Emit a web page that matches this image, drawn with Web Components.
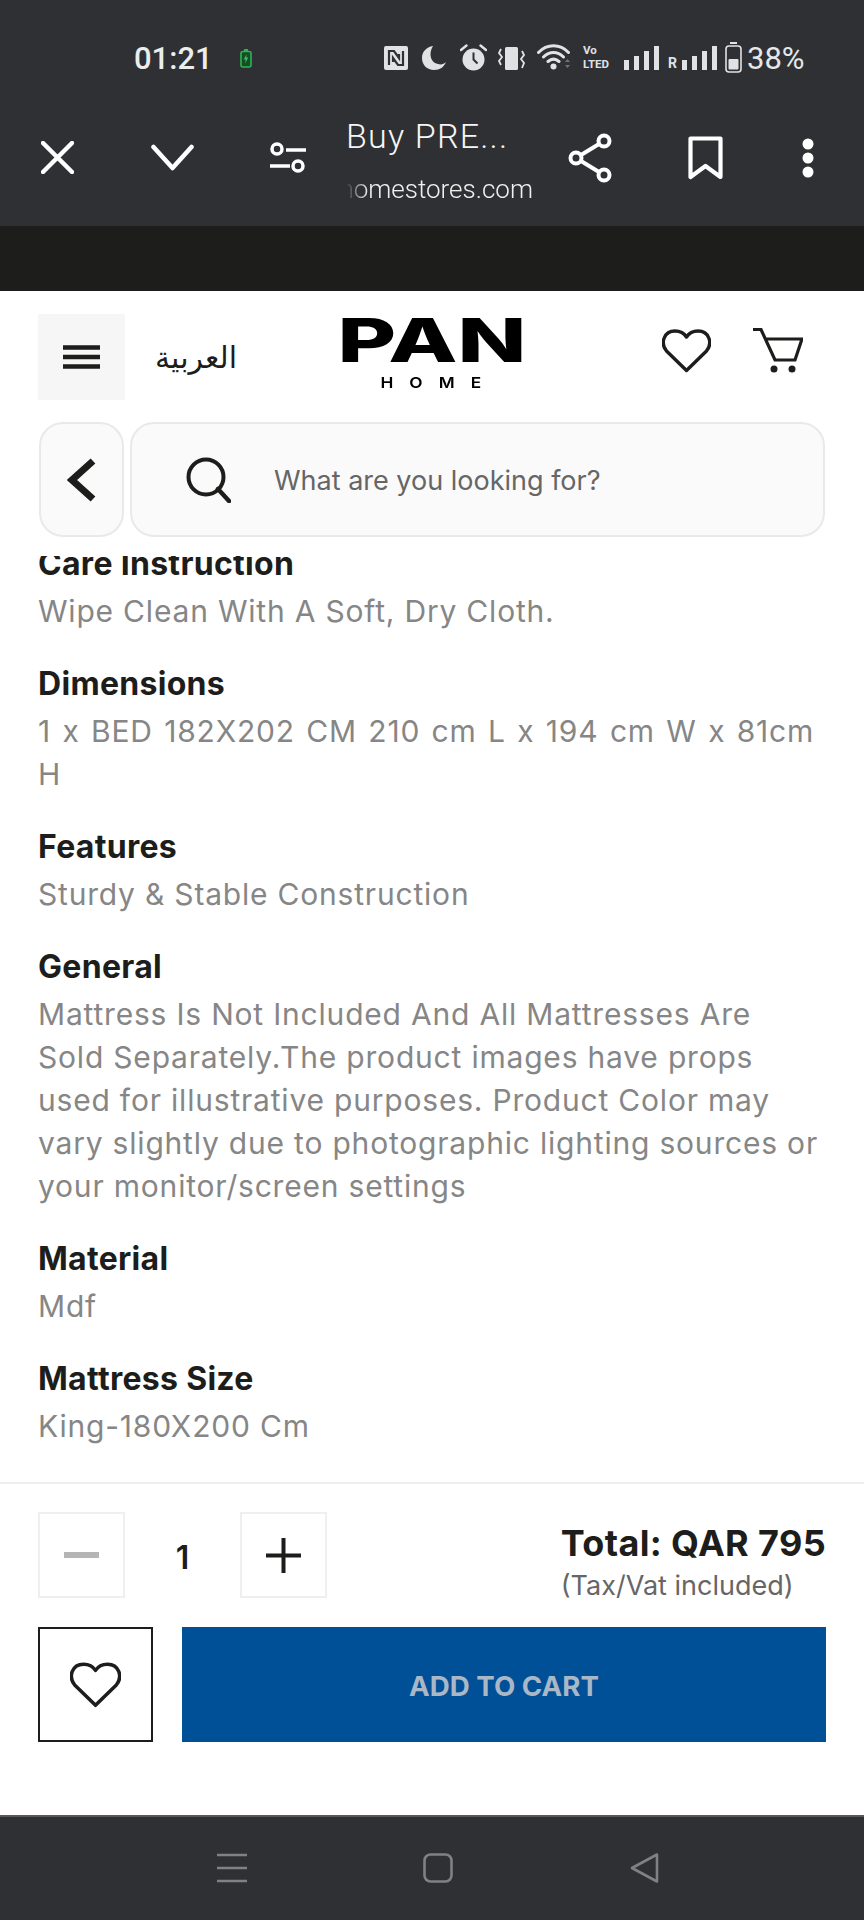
<!DOCTYPE html>
<html>
<head>
<meta charset="utf-8">
<style>
  html, body { margin: 0; padding: 0; background: #fff; }
  body { width: 864px; height: 1920px; overflow: hidden; display: flex; flex-direction: column; font-family: Inter, "Liberation Sans", sans-serif; }
</style>
</head>
<body>
<status-bar></status-bar>
<tab-toolbar title-text="Buy PRE..." domain="homestores.com"></tab-toolbar>
<site-header></site-header>
<spec-list>
  <spec-item label="Care Instruction">Wipe Clean With A Soft, Dry Cloth.</spec-item>
  <spec-item label="Dimensions"><span style="word-spacing:2.2px">1 x BED 182X202 CM 210 cm L x 194 cm W x 81cm H</span></spec-item>
  <spec-item label="Features">Sturdy &amp; Stable Construction</spec-item>
  <spec-item label="General">Mattress Is Not Included And All Mattresses Are Sold Separately.The product images have props used for illustrative purposes. Product Color may vary slightly due to photographic lighting sources or your monitor/screen settings</spec-item>
  <spec-item label="Material">Mdf</spec-item>
  <spec-item label="Mattress Size">King-180X200 Cm</spec-item>
</spec-list>
<buy-footer></buy-footer>
<nav-bar></nav-bar>

<script>
class StatusBar extends HTMLElement {
  constructor() {
    super();
    this.attachShadow({ mode: 'open' });
    this.shadowRoot.innerHTML = `
      <style>
        :host { display: block; height: 96px; background: #2f3034; color: #e6e7e9; font-family: Roboto, sans-serif; position: relative; }
        .row { display: flex; align-items: flex-start; height: 96px; padding-left: 134px; box-sizing: border-box; }
        .time { font-size: 31px; line-height: 36px; margin-top: 41px; font-weight: 500; width: 106px; color: #eceded; }
        svg { display: block; flex: none; }
        .pct { font-size: 31px; line-height: 36px; margin-top: 41px; margin-left: 5px; }
        .volte { margin: 44px 0 0 12px; width: 29px; font: 700 11.500px/13.500px Roboto, sans-serif; color: #e1e2e4; white-space: nowrap; }
      </style>
      <div class="row">
        <span class="time">01:21</span>
        <svg style="margin-top:49px" width="12" height="19" viewBox="0 0 12 19"><rect x="1" y="2.500" width="10" height="15.500" rx="2" fill="#154d26" stroke="#2fb352" stroke-width="1.600"/><rect x="4" y="0" width="4" height="2" fill="#2fb352"/><path d="M6.600 5 3.800 10.500h2l-.6 4 3-6H6.200z" fill="#38c45c"/></svg>
        <svg style="margin:46px 0 0 132px" width="24" height="24" viewBox="0 0 24 24"><rect width="24" height="24" rx="2" fill="#e1e2e4"/><path d="M5 19V5h5l5 7V8M19 5v14h-5l-5-7v4" fill="none" stroke="#2f3034" stroke-width="2.200"/></svg>
        <svg style="margin:46px 0 0 14px" width="24" height="24" viewBox="0 0 24 24"><path d="M11 0C4 1 0 6 0 12c0 7 5 12 12 12 6 0 10-3 12-8-2 2-5 3-8 2C9 17 6 8 11 0z" fill="#e1e2e4"/></svg>
        <svg style="margin:44px 0 0 14px" width="27" height="27" viewBox="0 0 27 27"><circle cx="13.500" cy="15.500" r="11" fill="#e1e2e4"/><path d="M13.500 8.500v7l4 4" fill="none" stroke="#2f3034" stroke-width="2"/><path d="M1 6 6.500 1.500M26 6 20.500 1.500" stroke="#e1e2e4" stroke-width="2.400" stroke-linecap="round"/></svg>
        <svg style="margin:47px 0 0 11px" width="27" height="23" viewBox="0 0 27 23"><rect x="7" y="0" width="13" height="23" rx="1.500" fill="#e1e2e4"/><path d="M3 2 1 6l3 4-3 4 2 4M24 4l2 4-3 4 3 4-2 5" fill="none" stroke="#e1e2e4" stroke-width="1.800"/></svg>
        <svg style="margin:44px 0 0 12px" width="34" height="26" viewBox="0 0 34 26"><path d="M1.500 8.500C10-.5 23-.5 31.500 8.500M6.500 13c6-6 14-6 20 0M11 17.500c3.500-3 7.500-3 11 0" fill="none" stroke="#e1e2e4" stroke-width="3" stroke-linecap="round"/><circle cx="16.500" cy="22.500" r="3" fill="#e1e2e4"/><path d="M28 18l2.500-3 2.500 3zM28 21l2.500 3 2.500-3z" fill="#70727a"/></svg>
        <span class="volte">Vo<br>LTED</span>
        <svg style="margin:46px 0 0 12px" width="35" height="24" viewBox="0 0 35 24"><g fill="#e1e2e4"><rect x="0" y="14" width="5" height="10"/><rect x="10" y="10" width="5" height="14"/><rect x="20" y="5" width="5" height="19"/><rect x="30" y="0" width="5" height="24"/></g></svg>
        <span style="margin:55px 0 0 9px;width:14px;font:700 14px/16px Roboto,sans-serif;color:#e1e2e4">R</span>
        <svg style="margin:46px 0 0 0" width="35" height="24" viewBox="0 0 35 24"><g fill="#e1e2e4"><rect x="0" y="14" width="5" height="10"/><rect x="10" y="10" width="5" height="14"/><rect x="20" y="5" width="5" height="19"/><rect x="30" y="0" width="5" height="24"/></g></svg>
        <svg style="margin:42px 0 0 8px" width="17" height="31" viewBox="0 0 17 31"><rect x="5" y="0" width="7" height="2" fill="#e1e2e4"/><rect x="1" y="4" width="15" height="26" rx="3" fill="none" stroke="#e1e2e4" stroke-width="1.600"/><rect x="3.500" y="17" width="10" height="10.500" rx="1" fill="#e1e2e4"/></svg>
        <span class="pct">38%</span>
      </div>
    `;
  }
}
customElements.define('status-bar', StatusBar);

class TabToolbar extends HTMLElement {
  constructor() {
    super();
    this.attachShadow({ mode: 'open' });
    const title = this.getAttribute('title-text');
    const domain = this.getAttribute('domain');
    this.shadowRoot.innerHTML = `
      <style>
        :host { display: block; background: #2f3034; color: #fff; font-family: Roboto, sans-serif; }
        .bar { height: 130px; display: flex; align-items: center; padding-bottom: 7px; box-sizing: border-box; }
        .strip { height: 65px; background: #1d1e1c; }
        svg { display: block; flex: none; }
        .titles { width: 187px; margin-left: 40px; align-self: flex-start; overflow: hidden; }
        .title { font-size: 34px; line-height: 40px; margin-top: 20px; font-weight: 300; letter-spacing: 1.200px; color: #f6f6f6; white-space: nowrap; }
        .domain { font-size: 26px; line-height: 30px; margin-top: 18px; font-weight: 300; color: #f0f0f0; white-space: nowrap; direction: rtl; text-align: left;
          -webkit-mask-image: linear-gradient(90deg, transparent 0, #000 22px); mask-image: linear-gradient(90deg, transparent 0, #000 22px); }
      </style>
      <div class="bar">
        <svg style="margin-left:41px" width="33" height="33" viewBox="0 0 33 33"><path d="M2 2l29 29M31 2 2 31" stroke="#fff" stroke-width="4.500" stroke-linecap="round"/></svg>
        <svg style="margin-left:77px" width="43" height="27" viewBox="0 0 43 27"><path d="M2.500 3 21.500 24 40.500 3" fill="none" stroke="#fff" stroke-width="4.500" stroke-linecap="round" stroke-linejoin="round"/></svg>
        <svg style="margin-left:76px" width="36" height="32" viewBox="0 0 36 32"><g fill="none" stroke="#fff" stroke-width="3.500"><circle cx="7" cy="7" r="5"/><circle cx="28" cy="24" r="5"/><path d="M16 8h20M0 24h20"/></g></svg>
        <div class="titles">
          <div class="title">${title}</div>
          <div class="domain"><bdi>${domain}</bdi></div>
        </div>
        <svg style="margin-left:35px" width="44" height="50" viewBox="0 0 44 50"><g fill="none" stroke="#fff" stroke-width="4"><circle cx="36" cy="8" r="5.500"/><circle cx="8" cy="25" r="5.500"/><circle cx="36" cy="42" r="5.500"/><path d="M31 11 13 22M13 28l18 11"/></g></svg>
        <svg style="margin-left:76px" width="35" height="44" viewBox="0 0 35 44"><path d="M2.500 2.500h30V41L17.500 30 2.500 41z" fill="none" stroke="#fff" stroke-width="4.200" stroke-linejoin="round"/></svg>
        <svg style="margin-left:79px" width="12" height="40" viewBox="0 0 12 40"><g fill="#fff"><circle cx="6" cy="6" r="5.500"/><circle cx="6" cy="20" r="5.500"/><circle cx="6" cy="34" r="5.500"/></g></svg>
      </div>
      <div class="strip"></div>
    `;
  }
}
customElements.define('tab-toolbar', TabToolbar);

class SiteHeader extends HTMLElement {
  constructor() {
    super();
    this.attachShadow({ mode: 'open' });
    this.shadowRoot.innerHTML = `
      <style>
        :host { display: block; background: #fff; padding: 23px 39px 19px 38px; color: #1d1d1b; position: relative; z-index: 2; }
        .top { display: flex; align-items: flex-start; height: 86px; }
        .menu { width: 87px; height: 86px; background: #f6f6f6; display: flex; align-items: center; justify-content: center; flex: none; }
        .lang { font: 30px/40px "DejaVu Sans", sans-serif; width: 100px; margin: 24px 2px 0 30px; }
        .logo { width: 184px; margin-left: 83px; flex: none; display: flex; flex-direction: column; align-items: center; color: #000; }
        .pan { font: 800 60px/44px Inter, sans-serif; height: 44px; margin-top: 4px; transform: scaleX(1.5); white-space: nowrap; }
        .home { font: 600 15px/14px Inter, sans-serif; letter-spacing: 14px; margin: 14px -14px 0 0; transform: scaleX(1.15); }
        .heart { margin: 15px 0 0 138px; }
        .cart { margin: 14px 0 0 42px; }
        svg { display: block; flex: none; }
        .search { display: flex; gap: 6px; margin-top: 22px; height: 115px; }
        .back, .field { background: #fafafa; border: 2px solid #e9e9e9; box-sizing: border-box; border-radius: 24px; display: flex; align-items: center; }
        .back { width: 85px; margin-left: 1px; justify-content: center; flex: none; }
        .field { flex: 1; padding-left: 54px; }
        .ph { font: 400 27px/40px Inter, sans-serif; color: #666; margin: 3px 0 0 43px; }
      </style>
      <div class="top">
        <div class="menu"><svg width="37" height="24" viewBox="0 0 37 24"><path d="M0 2.500h37M0 12h37M0 21.500h37" stroke="#1d1d1b" stroke-width="4.500"/></svg></div>
        <span class="lang" lang="ar">العربية</span>
        <div class="logo"><span class="pan">PAN</span><span class="home">HOME</span></div>
        <svg class="heart" width="49" height="44" viewBox="0 0 49 44"><path d="M24.500 41.500 4.500 22C-2 14 2 2 13 2c5 0 9 2 11.500 6C27 4 31 2 36 2c11 0 15 12 8.500 20z" fill="none" stroke="#1d1d1b" stroke-width="3.400" stroke-linejoin="round"/></svg>
        <svg class="cart" width="50" height="46" viewBox="0 0 50 46"><path d="M0 1.500h8L22 32h20l7-21H13" fill="none" stroke="#1d1d1b" stroke-width="3.200"/><circle cx="21" cy="41" r="3.500" fill="#1d1d1b"/><circle cx="39" cy="41" r="3.500" fill="#1d1d1b"/></svg>
      </div>
      <div class="search">
        <div class="back"><svg width="30" height="44" viewBox="0 0 30 44"><path d="M26 3 5 22l21 19" fill="none" stroke="#1d1d1b" stroke-width="7"/></svg></div>
        <div class="field">
          <svg width="45" height="46" viewBox="0 0 45 46"><circle cx="20" cy="20" r="17.500" fill="none" stroke="#1d1d1b" stroke-width="4"/><path d="M32 32l11 12" stroke="#1d1d1b" stroke-width="4.500" stroke-linecap="round"/></svg>
          <span class="ph">What are you looking for?</span>
        </div>
      </div>
    `;
  }
}
customElements.define('site-header', SiteHeader);

class SpecList extends HTMLElement {
  constructor() {
    super();
    this.attachShadow({ mode: 'open' });
    this.shadowRoot.innerHTML = `
      <style>
        :host { display: flex; flex-direction: column; justify-content: flex-end; gap: 29px; flex: 1; min-height: 0; overflow: hidden; padding: 0 38px 34px; background: #fff; box-sizing: border-box; }
      </style>
      <slot></slot>
    `;
  }
}
customElements.define('spec-list', SpecList);

class SpecItem extends HTMLElement {
  constructor() {
    super();
    this.attachShadow({ mode: 'open' });
    this.shadowRoot.innerHTML = `
      <style>
        :host { display: block; flex: none; font-family: Inter, sans-serif; }
        h3 { margin: 0 0 5px; font-size: 32px; line-height: 43px; font-weight: 700; letter-spacing: .3px; color: #1d1d1b; }
        div { font-size: 30px; line-height: 43px; letter-spacing: .8px; color: #868686; }
      </style>
      <h3>${this.getAttribute('label')}</h3>
      <div><slot></slot></div>
    `;
  }
}
customElements.define('spec-item', SpecItem);

class BuyFooter extends HTMLElement {
  constructor() {
    super();
    this.attachShadow({ mode: 'open' });
    this.shadowRoot.innerHTML = `
      <style>
        :host { display: block; height: 333px; box-sizing: border-box; background: #fff; border-top: 2px solid #eeeeee; padding: 28px 38px 0; color: #1d1d1b; font-family: Inter, sans-serif; }
        .qty { display: flex; height: 86px; align-items: stretch; }
        .btn { width: 87px; border: 2px solid #efefef; box-sizing: border-box; display: flex; align-items: center; justify-content: center; flex: none; }
        .num { width: 115px; text-align: center; font-size: 32px; font-weight: 600; line-height: 92px; flex: none; }
        .total { margin-left: auto; }
        .sum { font-size: 36px; line-height: 44px; font-weight: 700; letter-spacing: .35px; margin-top: 9px; }
        .tax { font-size: 27px; line-height: 36px; color: #666; margin-top: 3px; }
        .actions { display: flex; gap: 29px; margin-top: 29px; height: 115px; }
        .wish { width: 115px; border: 2px solid #1d1d1b; box-sizing: border-box; display: flex; align-items: center; justify-content: center; flex: none; }
        .add { flex: 1; background: #005097; color: #aab7c7; font-size: 27.700px; font-weight: 700; display: flex; align-items: center; justify-content: center; padding-top: 2px; box-sizing: border-box; }
        svg { display: block; }
      </style>
      <div class="qty">
        <div class="btn"><svg width="35" height="6" viewBox="0 0 35 6"><rect width="35" height="6" fill="#b5b5b5"/></svg></div>
        <div class="num">1</div>
        <div class="btn"><svg width="35" height="35" viewBox="0 0 35 35"><path d="M0 17.500h35M17.500 0v35" stroke="#1d1d1b" stroke-width="4"/></svg></div>
        <div class="total">
          <div class="sum">Total: QAR 795</div>
          <div class="tax">(Tax/Vat included)</div>
        </div>
      </div>
      <div class="actions">
        <div class="wish"><svg width="51" height="46" viewBox="0 0 49 44"><path d="M24.500 41.500 4.500 22C-2 14 2 2 13 2c5 0 9 2 11.500 6C27 4 31 2 36 2c11 0 15 12 8.500 20z" fill="none" stroke="#1d1d1b" stroke-width="3.400" stroke-linejoin="round"/></svg></div>
        <div class="add">ADD TO CART</div>
      </div>
    `;
  }
}
customElements.define('buy-footer', BuyFooter);

class NavBar extends HTMLElement {
  constructor() {
    super();
    this.attachShadow({ mode: 'open' });
    this.shadowRoot.innerHTML = `
      <style>
        :host { display: flex; height: 105px; box-sizing: border-box; background: #2f3034; border-top: 2px solid #5a5757; padding: 36px 0 0 217px; align-items: flex-start; }
        svg { display: block; flex: none; }
      </style>
      <svg width="30" height="30" viewBox="0 0 30 30"><path d="M0 2h30M0 15h30M0 28h30" stroke="#808184" stroke-width="2.600"/></svg>
      <svg style="margin-left:176px" width="30" height="30" viewBox="0 0 30 30"><rect x="1.500" y="1.500" width="27" height="27" rx="6" fill="none" stroke="#808184" stroke-width="2.600"/></svg>
      <svg style="margin-left:177px" width="30" height="30" viewBox="0 0 30 30"><path d="M27 1.500V28.500L2 15z" fill="none" stroke="#808184" stroke-width="2.600" stroke-linejoin="round"/></svg>
    `;
  }
}
customElements.define('nav-bar', NavBar);
</script>
</body>
</html>
